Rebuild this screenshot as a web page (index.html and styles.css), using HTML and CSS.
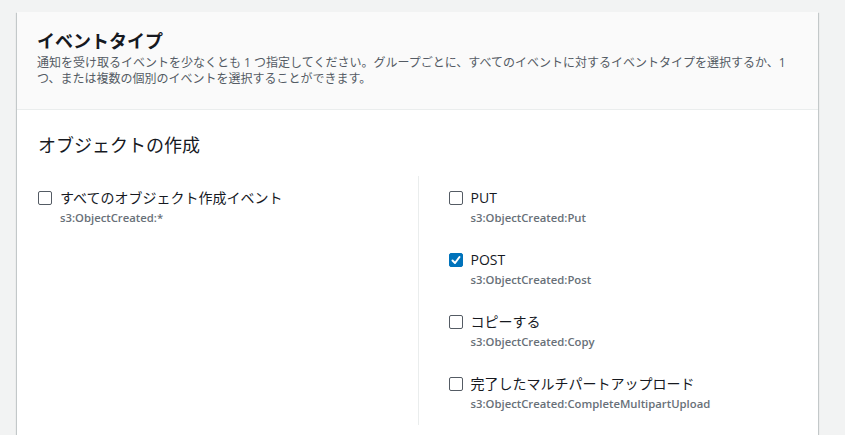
FILE: index.html
```html
<!DOCTYPE html>
<html lang="ja">
<head>
    <meta charset="UTF-8">
    <meta name="viewport" content="width=device-width, initial-scale=1.0">
    <title>イベントタイプ</title>
    <link rel="stylesheet" href="styles.css">
</head>
<body>
    <div class="card">
        <!-- Card header -->
        <div class="card-header">
            <h2>イベントタイプ</h2>
            <p class="description">通知を受け取るイベントを少なくとも 1 つ指定してください。グループごとに、すべてのイベントに対するイベントタイプを選択するか、1 つ、または複数の個別のイベントを選択することができます。</p>
        </div>

        <div class="card-body">
            <h3>オブジェクトの作成</h3>

            <div class="columns">
                <div class="column">
                    <label class="option">
                        <span class="checkbox"></span>
                        <span class="option-text">
                            <span class="option-label">すべてのオブジェクト作成イベント</span>
                            <span class="option-code">s3:ObjectCreated:*</span>
                        </span>
                    </label>
                </div>

                <div class="column column-right">
                    <label class="option">
                        <span class="checkbox"></span>
                        <span class="option-text">
                            <span class="option-label">PUT</span>
                            <span class="option-code">s3:ObjectCreated:Put</span>
                        </span>
                    </label>
                    <label class="option">
                        <span class="checkbox checked">
                            <svg viewBox="0 0 14 14" width="14" height="14"><polyline points="3.5,7.5 6,10 10.5,4" fill="none" stroke="#fff" stroke-width="2" stroke-linecap="round" stroke-linejoin="round"/></svg>
                        </span>
                        <span class="option-text">
                            <span class="option-label">POST</span>
                            <span class="option-code">s3:ObjectCreated:Post</span>
                        </span>
                    </label>
                    <label class="option">
                        <span class="checkbox"></span>
                        <span class="option-text">
                            <span class="option-label">コピーする</span>
                            <span class="option-code">s3:ObjectCreated:Copy</span>
                        </span>
                    </label>
                    <label class="option">
                        <span class="checkbox"></span>
                        <span class="option-text">
                            <span class="option-label">完了したマルチパートアップロード</span>
                            <span class="option-code">s3:ObjectCreated:CompleteMultipartUpload</span>
                        </span>
                    </label>
                </div>
            </div>
        </div>
    </div>
</body>
</html>
```

FILE: styles.css
```css
body {
    margin: 0;
    background: #f2f3f3;
    color: #16191f;
    font-family: 'Open Sans', 'Noto Sans CJK JP', sans-serif;
}

.card {
    margin: 12px 27px 0 17px;
    background: #fff;
    box-shadow: 0 1px 1px 0 rgba(0, 28, 36, 0.3), 1px 1px 1px 0 rgba(0, 28, 36, 0.15), -1px 1px 1px 0 rgba(0, 28, 36, 0.15);
}

.card-header {
    background: #fafafa;
    padding: 18px 20px 22px;
    border-bottom: 1px solid #eaeded;
}

.card-header h2 {
    margin: 0;
    font-size: 18px;
    line-height: 22px;
    font-weight: bold;
}

.description {
    margin: 3px 0 0;
    font-size: 12px;
    line-height: 16px;
    color: #545b64;
}

.card-body {
    padding: 24px 21px 11px;
}

.card-body h3 {
    margin: 0 0 20px;
    font-size: 18px;
    line-height: 22px;
    font-weight: normal;
}

/* Two columns split by a thin rule */
.columns {
    display: grid;
    grid-template-columns: 1fr 1fr;
}

.column {
    padding: 12px 31px 13px 0;
    display: flex;
    flex-direction: column;
    gap: 24px;
}

.column-right {
    border-left: 1px solid #eaeded;
    padding: 12px 0 13px 30px;
}

.option {
    display: flex;
    align-items: flex-start;
    gap: 8px;
    cursor: pointer;
}

.checkbox {
    flex: none;
    width: 14px;
    height: 14px;
    margin-top: 3px;
    box-sizing: border-box;
    border: 1px solid #545b64;
    border-radius: 2px;
    background: #fff;
    display: flex;
}

.checkbox.checked {
    background: #0073bb;
    border-color: #0073bb;
}

.checkbox svg {
    margin: -1px;
}

.option-text {
    display: flex;
    flex-direction: column;
}

.option-label {
    font-size: 14px;
    line-height: 20px;
}

.option-code {
    margin-top: 2px;
    font-size: 11.3px;
    line-height: 16px;
    font-weight: 600;
    color: #687078;
}
```
